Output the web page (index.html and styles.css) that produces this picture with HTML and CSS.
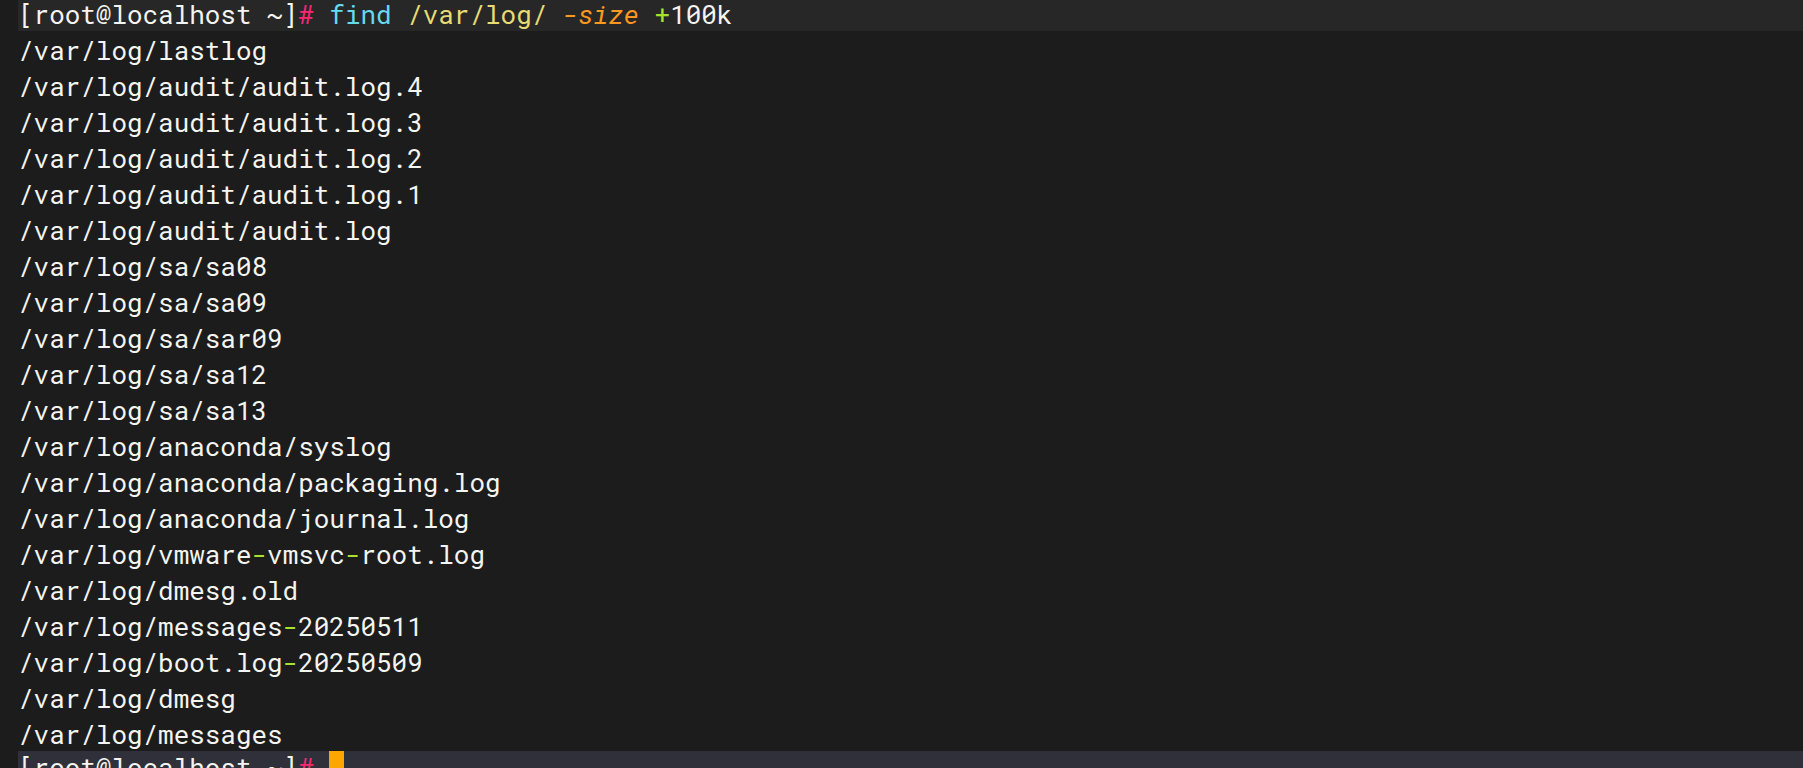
FILE: index.html
```html
<!DOCTYPE html>
<html>
<head>
<meta charset="utf-8">
<link rel="stylesheet" href="styles.css">
</head>
<body>
<div class="screen">
  <div class="row hl"><span class="w">[root@localhost ~]</span><span class="pk">#</span> <span class="cy">find</span> <span class="yl">/var/log/</span> <span class="or it">-size</span> <span class="gr">+</span>100k</div>
  <div class="row">/var/log/lastlog</div>
  <div class="row">/var/log/audit/audit.log.4</div>
  <div class="row">/var/log/audit/audit.log.3</div>
  <div class="row">/var/log/audit/audit.log.2</div>
  <div class="row">/var/log/audit/audit.log.1</div>
  <div class="row">/var/log/audit/audit.log</div>
  <div class="row">/var/log/sa/sa08</div>
  <div class="row">/var/log/sa/sa09</div>
  <div class="row">/var/log/sa/sar09</div>
  <div class="row">/var/log/sa/sa12</div>
  <div class="row">/var/log/sa/sa13</div>
  <div class="row">/var/log/anaconda/syslog</div>
  <div class="row">/var/log/anaconda/packaging.log</div>
  <div class="row">/var/log/anaconda/journal.log</div>
  <div class="row">/var/log/vmware<span class="gr">-</span>vmsvc<span class="gr">-</span>root.log</div>
  <div class="row">/var/log/dmesg.old</div>
  <div class="row">/var/log/messages<span class="gr">-</span>20250511</div>
  <div class="row">/var/log/boot.log<span class="gr">-</span>20250509</div>
  <div class="row">/var/log/dmesg</div>
  <div class="row">/var/log/messages</div>
  <div class="row cur"><span class="w">[root@localhost ~]</span><span class="pk">#</span> <span class="caret"></span></div>
</div>
</body>
</html>
```
FILE: styles.css
```css
html, body {
  margin: 0;
  padding: 0;
  background: #1c1c1c;
  height: 768px;
  overflow: hidden;
}
.screen {
  margin-top: -5px;
  padding-left: 18px;
  font-family: "Roboto Mono", "DejaVu Sans Mono", monospace;
  font-size: 25.95px;
  color: #f4f4f0;
}
.row {
  height: 36px;
  box-sizing: border-box;
  padding-top: 3px;
  line-height: 33px;
  white-space: pre;
}
.hl {
  background: #272727;
}
.cur {
  background: #2f3039;
  padding-top: 0;
}
.w { color: #f4f4f0; }
.pk { color: #f92672; }
.cy { color: #66d9ef; }
.yl { color: #e6db74; }
.or { color: #fd971f; }
.it { font-style: italic; }
.gr { color: #a6e22e; }
.caret {
  display: inline-block;
  width: 15px;
  height: 36px;
  background: #ffa500;
  vertical-align: top;
}
```
